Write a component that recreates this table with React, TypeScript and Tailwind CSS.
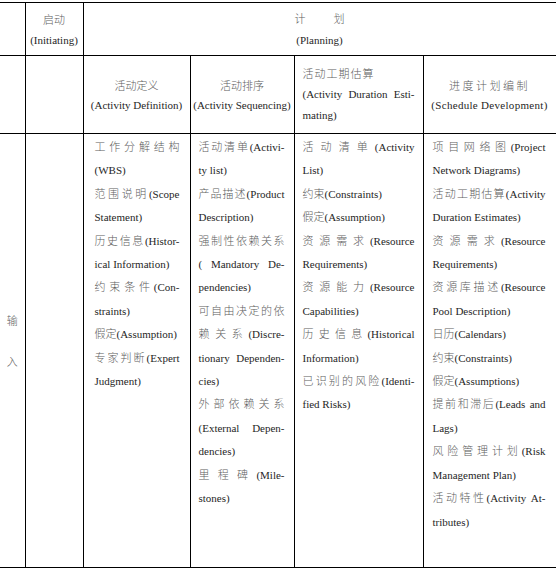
const inputs: string[][][] = [
  [
    ["工作分解结构", "(WBS)"],
    ["范围说明(Scope", "Statement)"],
    ["历史信息(Histor-", "ical Information)"],
    ["约束条件(Con-", "straints)"],
    ["假定(Assumption)"],
    ["专家判断(Expert", "Judgment)"],
  ],
  [
    ["活动清单(Activi-", "ty list)"],
    ["产品描述(Product", "Description)"],
    ["强制性依赖关系", "( Mandatory De-", "pendencies)"],
    ["可自由决定的依", "赖关系(Discre-", "tionary Dependen-", "cies)"],
    ["外部依赖关系", "(External Depen-", "dencies)"],
    ["里程碑(Mile-", "stones)"],
  ],
  [
    ["活动清单(Activity", "List)"],
    ["约束(Constraints)"],
    ["假定(Assumption)"],
    ["资源需求(Resource", "Requirements)"],
    ["资源能力(Resource", "Capabilities)"],
    ["历史信息(Historical", "Information)"],
    ["已识别的风险(Identi-", "fied Risks)"],
  ],
  [
    ["项目网络图(Project", "Network Diagrams)"],
    ["活动工期估算(Activity", "Duration Estimates)"],
    ["资源需求(Resource", "Requirements)"],
    ["资源库描述(Resource", "Pool Description)"],
    ["日历(Calendars)"],
    ["约束(Constraints)"],
    ["假定(Assumptions)"],
    ["提前和滞后(Leads and", "Lags)"],
    ["风险管理计划(Risk", "Management Plan)"],
    ["活动特性(Activity At-", "tributes)"],
  ],
];

const pads = ["pl-[11px] pr-[10px]", "pl-[8px] pr-[9px]", "pl-[8px] pr-[8px]", "pl-[9px] pr-[10px]"];

// chinese runs are printed lighter than the latin ones in the scan
function Txt({ s }: { s: string }) {
  const parts = s.split(/([\u4e00-\u9fff]+)/).filter(Boolean);
  return (
    <>
      {parts.map((p, i) =>
        /[\u4e00-\u9fff]/.test(p) ? (
          <span key={i} className="text-[#5e5e5e] font-light">{p}</span>
        ) : (
          <span key={i}>{p}</span>
        )
      )}
    </>
  );
}

function Item({ lines }: { lines: string[] }) {
  return (
    <div>
      {lines.map((l, i) => (
        <div
          key={i}
          className={i < lines.length - 1 ? "text-justify [text-align-last:justify]" : "text-left"}
        >
          <Txt s={l} />
        </div>
      ))}
    </div>
  );
}

export default function App() {
  const cell = "border border-black p-0";
  return (
    <div
      className="bg-white pt-[2px] text-[11px] text-[#262626]"
      style={{ fontFamily: '"Liberation Serif", "Noto Sans CJK SC", serif' }}
    >
      <table className="w-[556px] table-fixed border-collapse">
        <colgroup>
          <col className="w-[25px]" />
          <col className="w-[58px]" />
          <col className="w-[107px]" />
          <col className="w-[104px]" />
          <col className="w-[129px]" />
          <col className="w-[133px]" />
        </colgroup>
        <tbody>
          <tr className="h-[53px]">
            <td className={`${cell} border-l-0`} />
            <td className={`${cell} text-center align-middle leading-[20px] pt-[2px]`}>
              <div><Txt s="启动" /></div>
              <div>(Initiating)</div>
            </td>
            <td colSpan={4} className={`${cell} text-center align-middle leading-[21px] pt-[2px]`}>
              <div>
                <Txt s="计" />
                <span className="inline-block w-[28px]" />
                <Txt s="划" />
              </div>
              <div>(Planning)</div>
            </td>
          </tr>
          <tr className="h-[78px]">
            <td className={`${cell} border-l-0`} />
            <td className={cell} />
            <td className={`${cell} text-center align-middle leading-[19px] pt-[2px]`}>
              <div><Txt s="活动定义" /></div>
              <div>(Activity Definition)</div>
            </td>
            <td className={`${cell} text-center align-middle leading-[19px] pt-[2px]`}>
              <div><Txt s="活动排序" /></div>
              <div className="whitespace-nowrap">(Activity Sequencing)</div>
            </td>
            <td className={`${cell} align-middle leading-[20.5px] pl-[8px] pr-[8px]`}>
              <div className="tracking-[1px]"><Txt s="活动工期估算" /></div>
              <div className="text-justify [text-align-last:justify]">(Activity Duration Esti-</div>
              <div>mating)</div>
            </td>
            <td className={`${cell} text-center align-middle leading-[19px] pt-[2px]`}>
              <div className="tracking-[2.5px]"><Txt s="进度计划编制" /></div>
              <div className="tracking-[0.3px]">(Schedule Development)</div>
            </td>
          </tr>
          <tr className="h-[434px]">
            <td className={`${cell} border-l-0 text-center align-middle leading-[41px] pb-[17px]`}>
              <div><Txt s="输" /></div>
              <div><Txt s="入" /></div>
            </td>
            <td className={cell} />
            {inputs.map((col, ci) => (
              <td key={ci} className={`${cell} align-top pt-[2px] leading-[23.4px] ${pads[ci]}`}>
                {col.map((lines, i) => (
                  <Item key={i} lines={lines} />
                ))}
              </td>
            ))}
          </tr>
        </tbody>
      </table>
    </div>
  );
}
